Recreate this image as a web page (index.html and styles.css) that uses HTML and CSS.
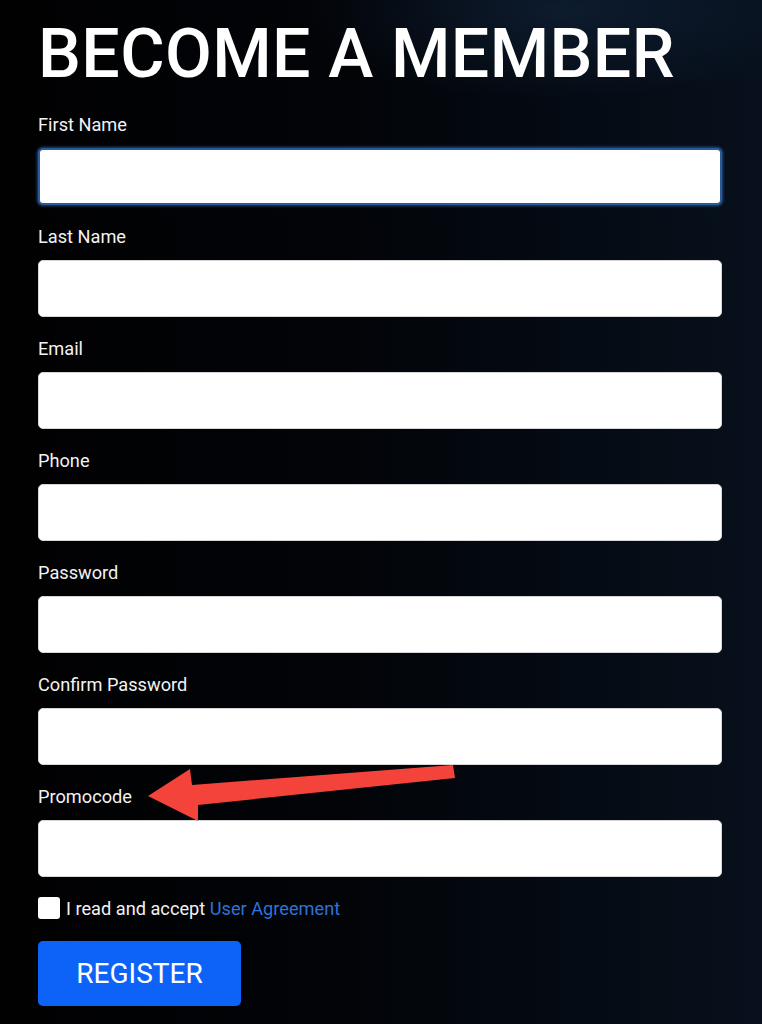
FILE: index.html
```html
<!DOCTYPE html>
<html lang="en">
<head>
  <meta charset="UTF-8" />
  <meta name="viewport" content="width=device-width, initial-scale=1.0" />
  <title>Become a Member</title>
  <link rel="stylesheet" href="styles.css">
</head>
<body>
  <main class="signup">
    <h1 class="title">BECOME A MEMBER</h1>

    <form class="signup-form">
      <div class="field">
        <label for="firstName">First Name</label>
        <input type="text" id="firstName" class="focused">
      </div>
      <div class="field">
        <label for="lastName">Last Name</label>
        <input type="text" id="lastName">
      </div>
      <div class="field">
        <label for="email">Email</label>
        <input type="email" id="email">
      </div>
      <div class="field">
        <label for="phone">Phone</label>
        <input type="tel" id="phone">
      </div>
      <div class="field">
        <label for="password">Password</label>
        <input type="password" id="password">
      </div>
      <div class="field">
        <label for="confirm">Confirm Password</label>
        <input type="password" id="confirm">
      </div>
      <div class="field">
        <label for="promo">Promocode</label>
        <input type="text" id="promo">
      </div>

      <div class="agree">
        <span class="checkbox"></span>
        <span>I read and accept <a href="#">User Agreement</a></span>
      </div>

      <button type="button" class="register">REGISTER</button>
    </form>

    <!-- red annotation arrow pointing at Promocode -->
    <svg class="arrow" width="320" height="60" viewBox="0 0 320 60">
      <polygon fill="#f4433a" points="0,31 42,4 44,20 305,0 307,13 50,40 50,56"/>
    </svg>
  </main>
</body>
</html>
```

FILE: styles.css
```css
* {
  margin: 0;
  padding: 0;
  box-sizing: border-box;
  font-family: Roboto, 'Liberation Sans', sans-serif;
}
body {
  background: #000;
  min-height: 100vh;
}
.signup {
  position: relative;
  min-height: 1024px;
  padding: 20px 40px 0 38px;
  background:
    radial-gradient(ellipse 260px 90px at 560px 10px, rgba(30, 60, 100, 0.35), transparent),
    linear-gradient(90deg, #010102 0%, #020408 45%, #07101c 100%);
  color: #fff;
}
.title {
  font-size: 68px;
  font-weight: 500;
  line-height: 68px;
  letter-spacing: 0.4px;
  color: #fff;
  margin-bottom: 26px;
}
.field {
  margin-bottom: 21px;
}
.field label {
  display: block;
  font-size: 18.2px;
  line-height: 22px;
  color: #f2f2f2;
  margin-bottom: 12px;
}
.field input {
  display: block;
  width: 684px;
  height: 57px;
  border: 1px solid #d6d6d6;
  border-radius: 5px;
  background: #fff;
  outline: none;
}
.field input.focused {
  border: 2px solid #2a5a9a;
  box-shadow: 0 0 3px 1px rgba(60, 120, 200, 0.6);
}
.agree {
  display: flex;
  align-items: center;
  gap: 6px;
  font-size: 18.2px;
  color: #f2f2f2;
  margin-top: -1px;
}
.checkbox {
  width: 22px;
  height: 22px;
  background: #fff;
  border-radius: 3px;
}
.agree a {
  color: #2f72d8;
  text-decoration: none;
}
.register {
  margin-top: 22px;
  width: 203px;
  height: 65px;
  border: none;
  border-radius: 5px;
  background: #0d63f7;
  color: #fff;
  font-size: 28px;
  font-weight: 400;
  cursor: pointer;
}
.arrow {
  position: absolute;
  left: 148px;
  top: 765px;
}
```
